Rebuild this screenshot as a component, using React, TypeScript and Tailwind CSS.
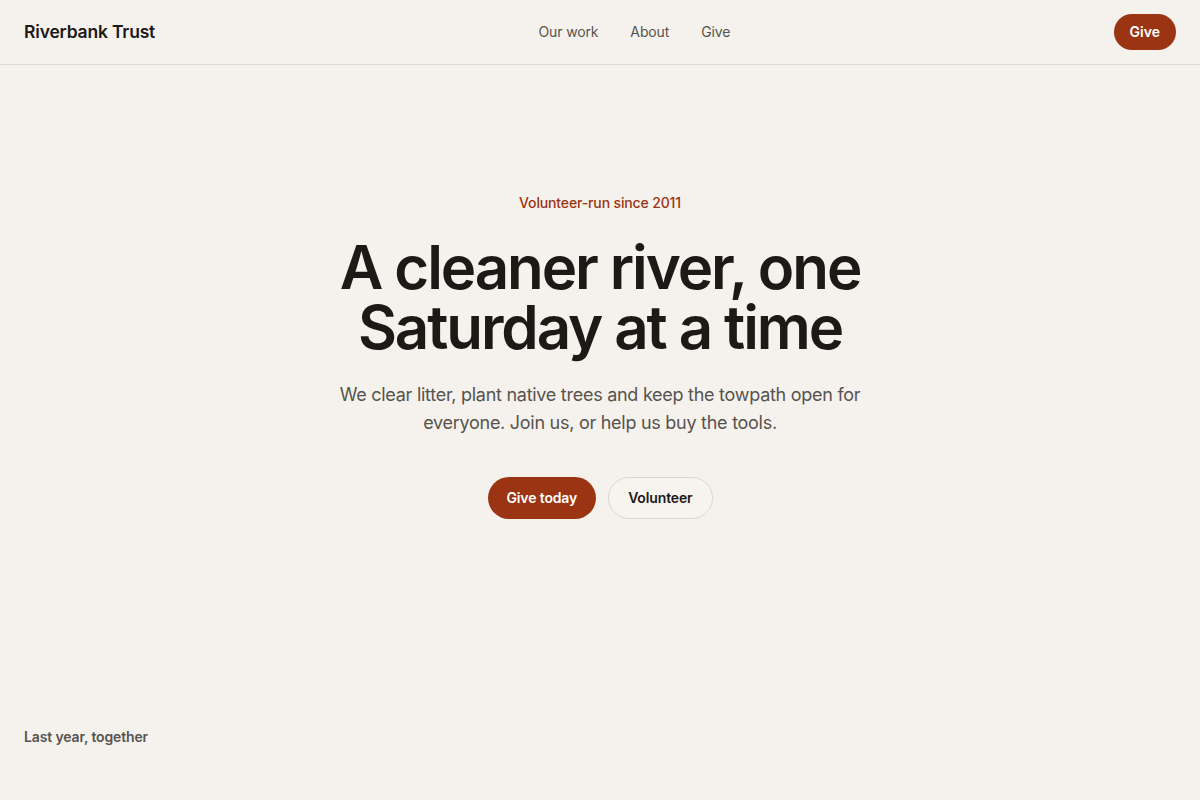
export default function App() {
  const navLinks = ["Our work", "About", "Give"];

  return (
    <div className="min-h-screen bg-[#f5f2ed] text-[#1c1917] font-['Inter','Liberation_Sans',sans-serif]">
      {/* Header */}
      <header className="border-b border-[#e2dacd]">
        <div className="h-16 px-6 flex items-center justify-between">
          <a href="#" className="text-[17.5px] font-semibold tracking-[-0.01em] text-[#1c1917]">
            Riverbank Trust
          </a>
          <nav className="flex items-center gap-8">
            {navLinks.map((link) => (
              <a key={link} href="#" className="text-sm tracking-[-0.01em] text-[#57534e]">
                {link}
              </a>
            ))}
          </nav>
          <button className="h-9 px-4 rounded-full bg-[#9a3412] text-white text-sm font-semibold">
            Give
          </button>
        </div>
      </header>

      {/* Hero */}
      <main>
        <section className="pt-32 pb-32 px-6 flex flex-col items-center text-center">
          <p className="text-sm font-medium tracking-[-0.01em] text-[#9a3412]">Volunteer-run since 2011</p>
          <h1 className="mt-6 text-[60px] leading-[60px] font-semibold tracking-[-0.035em] text-[#1c1917]">
            A cleaner river, one
            <br />
            Saturday at a time
          </h1>
          <p className="mt-6 max-w-[540px] text-lg leading-7 tracking-[-0.015em] text-[#57534e]">
            We clear litter, plant native trees and keep the towpath open for everyone. Join us, or help us buy the tools.
          </p>
          <div className="mt-10 flex items-center gap-3">
            <button className="h-[42px] px-[19px] rounded-full bg-[#9a3412] text-white text-sm font-semibold tracking-[-0.01em]">
              Give today
            </button>
            <button className="h-[42px] px-[19px] rounded-full border border-[#ddd6ca] bg-[#f7f4ef] text-[#1c1917] text-sm font-semibold tracking-[-0.01em]">
              Volunteer
            </button>
          </div>
        </section>

        {/* Stats */}
        <section className="px-6 pt-20 pb-16">
          <h2 className="text-sm font-semibold tracking-[-0.01em] text-[#57534e]">Last year, together</h2>
        </section>
      </main>
    </div>
  );
}
